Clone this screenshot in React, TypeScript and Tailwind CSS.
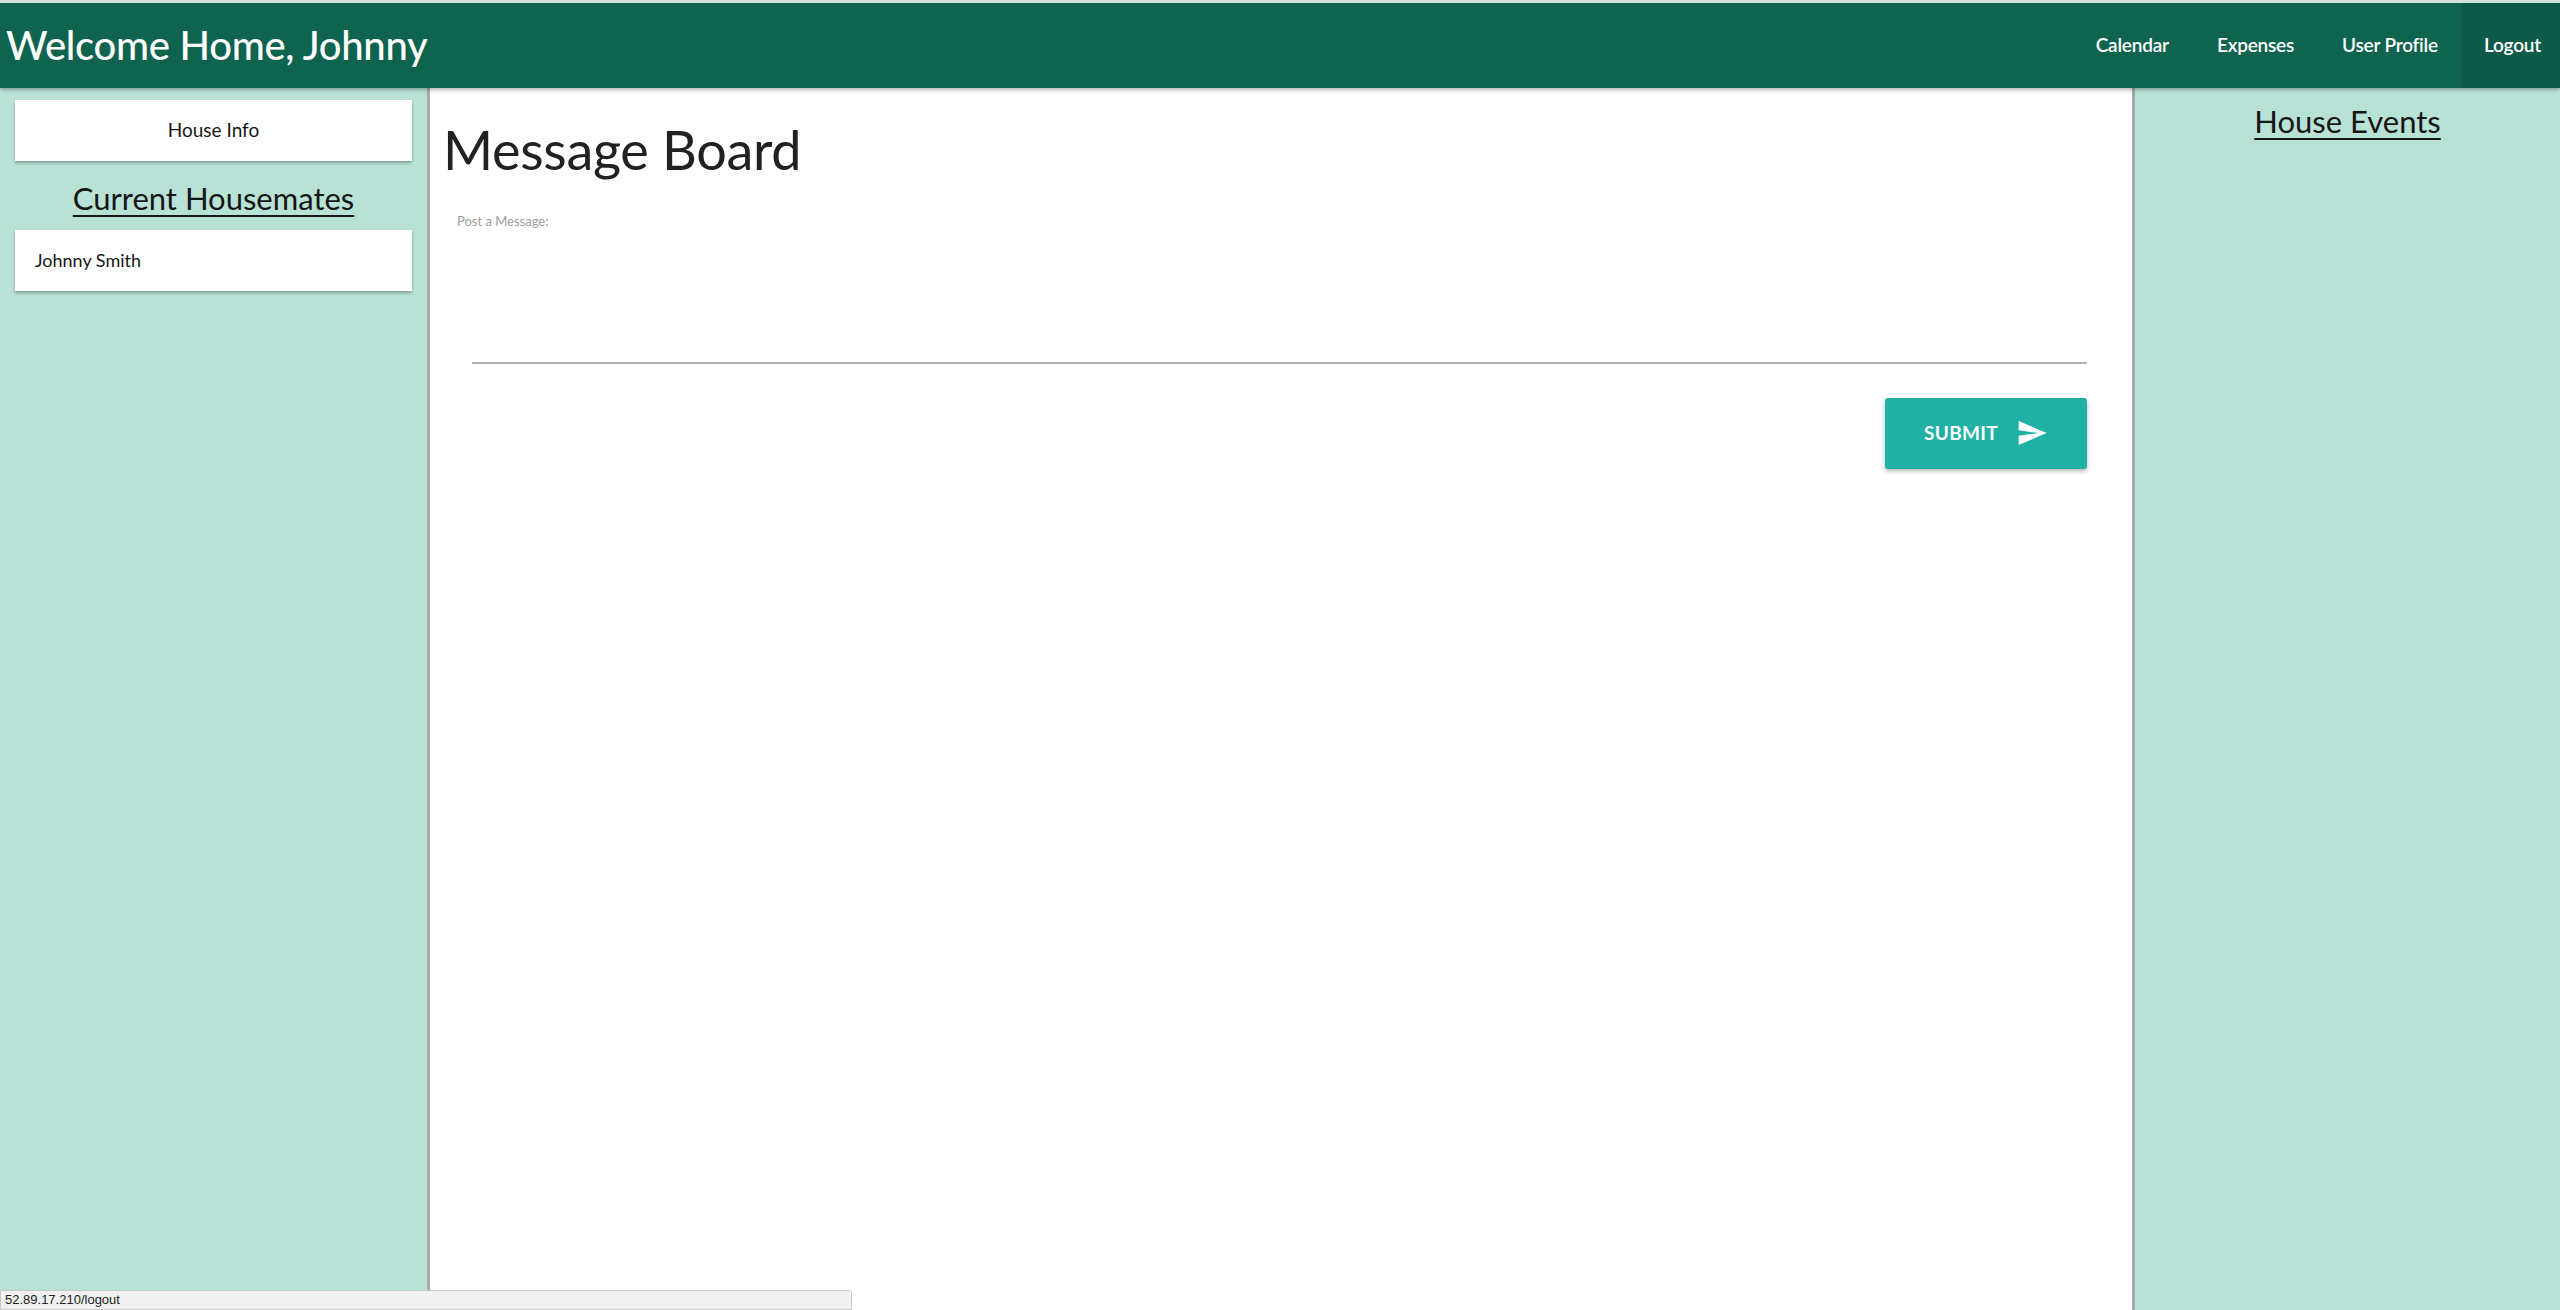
import React from 'react'

const navItems = [
  { label: 'Calendar', active: false },
  { label: 'Expenses', active: false },
  { label: 'User Profile', active: false },
  { label: 'Logout', active: true },
]

const SendIcon = () => (
  <svg viewBox="0 0 24 24" className="w-8 h-8" fill="white">
    <path d="M2.01 21L23 12 2.01 3 2 10l15 2-15 2z" />
  </svg>
)

export default function App() {
  return (
    <div className="relative h-[1310px] w-full flex flex-col overflow-hidden font-['Lato',sans-serif] text-[#161616]">
      {/* Top bar */}
      <header className="relative z-10 h-[88px] shrink-0 flex items-stretch justify-between bg-[#0f6450] border-t-[3px] border-[#d5dfdc] shadow-[0_2px_4px_rgba(0,0,0,0.3)]">
        <h1 className="pl-[6px] flex items-center text-[40px] font-medium text-white tracking-[-0.3px] pb-[2px]">
          Welcome Home, Johnny
        </h1>
        <nav className="flex items-stretch">
          {navItems.map((item) => (
            <a
              key={item.label}
              href="#"
              className={`flex items-center px-[24px] text-[19px] font-semibold text-white tracking-[-0.2px] ${
                item.active ? 'bg-[#0c5a47] pl-[22px] pr-[19px]' : ''
              }`}
            >
              {item.label}
            </a>
          ))}
        </nav>
      </header>

      <div className="flex flex-1 min-h-0">
        {/* Left column */}
        <aside className="w-[430px] shrink-0 bg-[#b9e2d7] border-r-[3px] border-[#a7aaa9] pt-[12px] px-[15px]">
          <div className="h-[61px] bg-white shadow-[0_2px_3px_rgba(0,0,0,0.3)] flex items-center justify-center text-[19px]">
            House Info
          </div>
          <h2 className="mt-[17px] text-center text-[31px] leading-[40px] underline underline-offset-[5px] decoration-[2px]">
            Current Housemates
          </h2>
          <div className="mt-[12px] h-[61px] bg-white shadow-[0_2px_3px_rgba(0,0,0,0.3)] flex items-center px-[20px] text-[18px]">
            Johnny Smith
          </div>
        </aside>

        {/* Message board */}
        <main className="flex-1 bg-white pl-[13px] pr-[45px]">
          <h1 className="mt-[30px] text-[54px] leading-[64px] text-[#212121] tracking-[-0.3px]">Message Board</h1>
          <form className="mt-[30px]">
            <label className="block pl-[14px] text-[13px] text-[#9e9e9e]">Post a Message:</label>
            <div className="ml-[29px] mt-[130px] h-[2px] bg-[#b1b1b1]" />
            <div className="flex justify-end mt-[34px]">
              <button
                type="button"
                className="w-[202px] h-[71px] rounded-[3px] bg-[#1fb1a3] shadow-[0_2px_4px_rgba(0,0,0,0.3)] flex items-center justify-center gap-[18px] text-white text-[19px] font-bold tracking-[0.3px]"
              >
                SUBMIT
                <SendIcon />
              </button>
            </div>
          </form>
        </main>

        {/* Right column */}
        <aside className="w-[428px] shrink-0 bg-[#b9e2d7] border-l-[3px] border-[#a7aaa9] pt-[13px]">
          <h2 className="text-center text-[31px] leading-[40px] underline underline-offset-[5px] decoration-[2px]">
            House Events
          </h2>
        </aside>
      </div>

      {/* Browser status bubble */}
      <div className="absolute bottom-0 left-0 w-[852px] h-[20px] bg-[#f1f1f1] border border-[#c8c8c8] rounded-tr-[3px] flex items-center pl-[4px] text-[13px] text-[#222] font-['Liberation_Sans',sans-serif]">
        52.89.17.210/logout
      </div>
    </div>
  )
}
